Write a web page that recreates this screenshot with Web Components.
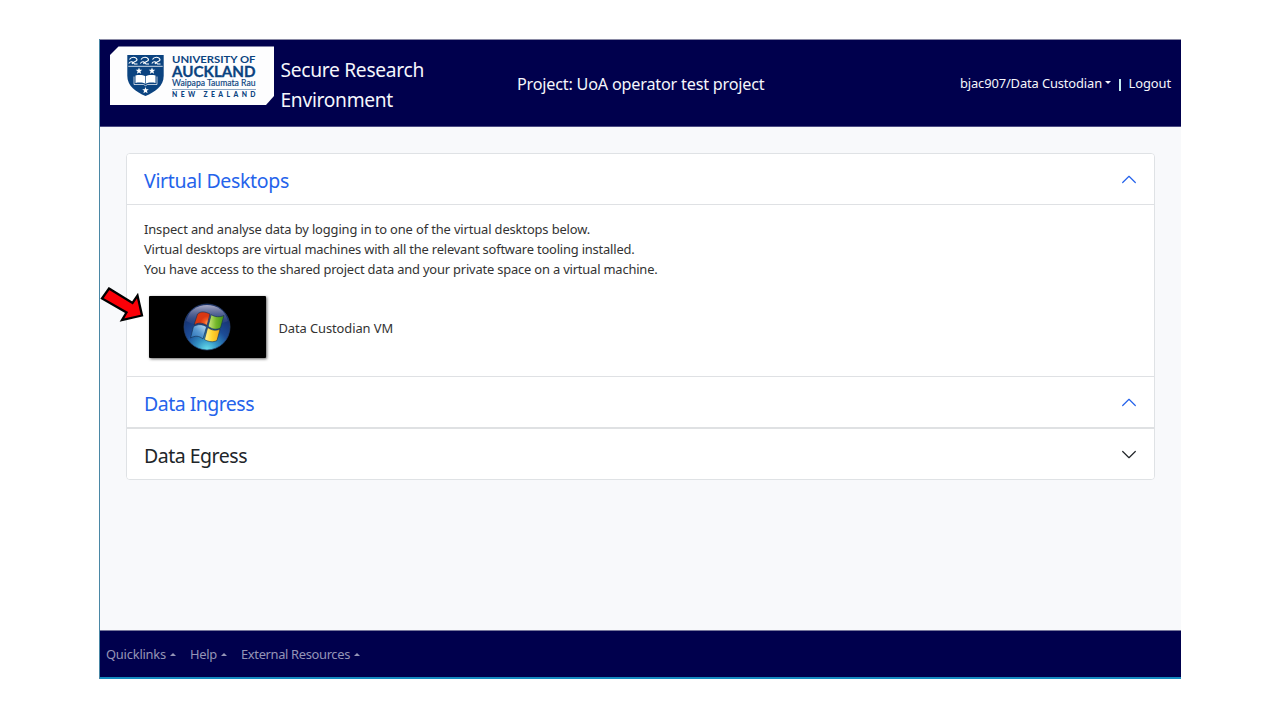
<!DOCTYPE html>
<html lang="en"><head><meta charset="utf-8"><title>Secure Research Environment</title>
<style>html,body{margin:0;background:#fff;font-family:"Noto Sans","Open Sans",sans-serif}body{width:1280px;height:720px;overflow:hidden}</style></head>
<body>
<sre-page></sre-page>
<script>
const define=(name,html,init)=>customElements.define(name,class extends HTMLElement{
  connectedCallback(){
    if(this.shadowRoot)return;
    const t=document.createElement('template');t.innerHTML=html;
    this.attachShadow({mode:'open'}).append(t.content.cloneNode(true));
    if(init)init(this,this.shadowRoot);
  }
});

// One line of text whose tracking is adjusted to fill the width given in "w".
define('fit-text',`<style>:host{display:block;white-space:nowrap}span{display:inline-block}</style><span><slot></slot></span>`,(el,root)=>{
  const s=root.querySelector('span'),w=+el.getAttribute('w');
  el.style.width=w+'px';
  s.style.letterSpacing=(w-s.getBoundingClientRect().width)/el.textContent.length+'px';
});

define('uoa-logo',`<style>:host{display:block;width:164px;height:59px}svg{display:block}</style>
<svg width="164" height="59" viewBox="0 0 164 59">
<path d="M8.500 0.500H164V50L156 59H0V9Z" fill="#fdfdfe"/>
<g fill="#0b4380"><path d="M17.300 9H53.700V30C53.700 40 45 46 35.500 50C26 46 17.300 40 17.300 30Z"/></g>
<path d="M18.300 20.300H52.700" stroke="#fff" stroke-width=".8"/>
<g fill="none" stroke="#fff" stroke-width="1.100"><path d="M19.500 13.500C21 10.500 26 10.500 27 13.500C27.500 16 23 15 22 18M18.800 17.500C21 14.500 23 16 24.500 18H27.500"/><path d="M31 13.500C32.500 10.500 37.500 10.500 38.500 13.500C39 16 34.500 15 33.500 18M30.300 17.500C32.500 14.500 34.500 16 36 18H39"/><path d="M42.500 13.500C44 10.500 49 10.500 50 13.500C50.500 16 46 15 45 18M41.800 17.500C44 14.500 46 16 47.500 18H50.500"/></g>
<g fill="#fff"><path d="M29 21.500l.9 2.200 2.400.1-1.900 1.500.7 2.400-2.100-1.300-2.100 1.300.7-2.400-1.900-1.500 2.400-.1z"/><path d="M42 21.500l.9 2.200 2.400.1-1.900 1.500.7 2.400-2.100-1.300-2.100 1.300.7-2.400-1.900-1.500 2.400-.1z"/><path d="M35.500 41l.9 2.200 2.400.1-1.900 1.500.7 2.400-2.100-1.300-2.100 1.300.7-2.400-1.900-1.500 2.400-.1z"/>
<path d="M25.500 29.500C29 28.700 33 29 35.500 30.200C38 29 42 28.700 45.500 29.500V37C42 36.200 38 36.400 35.500 37.800C33 36.400 29 36.200 25.500 37Z"/><path d="M24 30.500V38.500H33.500L35.500 39.700L37.500 38.500H47V30.500" fill="none" stroke="#fff" stroke-width=".7"/></g>
<path d="M35.500 30V37.500" stroke="#0b4380" stroke-width=".7"/>
<g fill="#0b4380" font-family="Lato,sans-serif">
<text x="62" y="16.900" font-size="10.300" font-weight="700" textLength="83.500" lengthAdjust="spacingAndGlyphs">UNIVERSITY OF</text>
<text x="62" y="30.500" font-size="15" font-weight="700" textLength="83.500" lengthAdjust="spacingAndGlyphs" stroke="#0b4380" stroke-width=".3">AUCKLAND</text>
<text x="62" y="40" font-size="9" textLength="83.500" lengthAdjust="spacingAndGlyphs" stroke="#0b4380" stroke-width=".15">Waipapa Taumata Rau</text>
<text x="62" y="50.700" font-size="6.800" font-weight="900" letter-spacing="2.500" textLength="86" lengthAdjust="spacing">NEW ZEALAND</text></g>
<path d="M62 43.500H146" stroke="#0b4380" stroke-width=".7" opacity=".65"/>
</svg>`);

define('menu-caret',`<style>:host{display:block;width:6px;height:3px}:host([up]){transform:rotate(180deg)}svg{display:block}</style><svg width="6" height="3"><path d="M0 0H6L3 3Z" fill="currentColor"/></svg>`);

define('site-header',`<style>
:host{display:flex;box-sizing:border-box;height:88px;background:#00004d;color:#f5f6fb;border-top:1px solid #8a8aa5;border-bottom:1px solid #4c4c82;padding:6px 9px 0 10px}
.title{margin:8.500px 0 0 6.500px;font-size:19.200px;line-height:30px;width:236.500px}
.project{font-size:16.200px;line-height:24px;margin-top:26px;width:443px}
.user{display:flex;align-items:center;height:20px;margin-top:27px;font-size:12.900px;line-height:20px}
menu-caret{margin:-1px 0 0 3px}.bar{width:1.500px;height:12px;background:#c2edf0;margin:3px 8px 0}
</style><uoa-logo></uoa-logo>
<div class="title"><fit-text w="143.500">Secure Research</fit-text><fit-text w="112.500">Environment</fit-text></div>
<div class="project"><fit-text w="247.500">Project: UoA operator test project</fit-text></div>
<div class="user"><fit-text w="142">bjac907/Data Custodian</fit-text><menu-caret></menu-caret><span class="bar"></span><fit-text w="42.500">Logout</fit-text></div>`);

define('fold-section',`<style>
:host{display:block;background:#fff;color:#212529}:host([open]){color:#2563eb}
header{display:flex;align-items:center;justify-content:space-between;height:50px;padding:0 18px 0 17px;font-size:19.500px;line-height:30px}
::slotted(fit-text){padding-top:3px}
svg{display:block}:host([open]) svg{transform:rotate(180deg)}
</style><header><slot name="title"></slot><svg width="14" height="9" viewBox="0 0 14 9"><path d="M.7 1.500L7 7.700L13.300 1.500" fill="none" stroke="currentColor" stroke-width="1.200" stroke-linecap="round" stroke-linejoin="round"/></svg></header><slot></slot>`);

define('vm-tile',`<style>:host{display:flex;align-items:center;height:62px;color:#333}
.screen{width:117px;height:62px;background:#000;border-radius:1px;box-shadow:1px 1px 3px #0009;display:grid;place-items:center;margin-right:12.500px}svg{display:block;margin-left:-2px}
::slotted(fit-text){padding-top:2px}
</style><div class="screen"><svg width="48" height="48" viewBox="0 0 48 48">
<defs><radialGradient id="o" cx=".5" cy="1" r=".95"><stop stop-color="#6be3ee"/><stop offset=".25" stop-color="#3393c5"/><stop offset=".52" stop-color="#1c4c97"/><stop offset="1" stop-color="#14265f"/></radialGradient>
<linearGradient id="h" x2="0" y2="1"><stop stop-color="#a9abc6"/><stop offset="1" stop-color="#45578f" stop-opacity=".1"/></linearGradient>
<radialGradient id="r" cx=".9" cy=".8"><stop stop-color="#ffb56d"/><stop offset=".5" stop-color="#f25a22"/><stop offset="1" stop-color="#d93712"/></radialGradient>
<linearGradient id="g"><stop stop-color="#d0ea80"/><stop offset=".5" stop-color="#75b72b"/><stop offset="1" stop-color="#419315"/></linearGradient>
<linearGradient id="b" x1="1" x2="0" y2="1"><stop stop-color="#c3e3f5"/><stop offset=".5" stop-color="#5798d0"/><stop offset="1" stop-color="#286fb5"/></linearGradient>
<linearGradient id="y"><stop stop-color="#fff4a0"/><stop offset=".5" stop-color="#ffd52e"/><stop offset="1" stop-color="#f3a91b"/></linearGradient></defs>
<circle cx="24" cy="24" r="23" fill="url(#o)" stroke="#294778" stroke-width=".7"/>
<path d="M3 18C6 7 14 2 24 2S42 7 45 18C34 23 15 25 3 18Z" fill="url(#h)"/>
<g stroke="#142e4c" stroke-width=".6"><path d="M14.500 11C18 8 22 8.500 27 11L24 22.500C19 19.500 15 19.500 11 22Z" fill="url(#r)"/><path d="M28.200 11.700C32 14 36.500 14.500 41 12.500L37.500 25C33 27 29 26.500 25.200 23.200Z" fill="url(#g)"/><path d="M10.500 23.500C15 21 19 21 23.500 23.700L20 36C16 32.500 12 32.500 7.500 35Z" fill="url(#b)"/><path d="M24.700 24.500C29 27.700 33 27.700 37 26.200L34 37.500C30 39.500 26 39 21.500 36.500Z" fill="url(#y)"/></g></svg></div><slot></slot>`);

define('red-pointer',`<style>:host{display:block;position:absolute;left:-1px;top:245px}svg{display:block}</style><svg width="46" height="40" viewBox="0 0 46 40"><path d="M10 4.500L33.500 19L38.500 11.500L43 31.500L23 36L27.500 28.500L3 14.500Z" fill="#fb0007" stroke="#000" stroke-width="2.300"/></svg>`);

define('fold-list',`<style>
:host{display:block;width:1027px;border:1px solid #dfe2e5;border-radius:4px;overflow:hidden;background:#fff}
.body{box-sizing:border-box;height:173px;border-top:1px solid #dfe1e4;border-bottom:1px solid #dfe1e4;padding:14px 17px 0;font-size:12.900px;line-height:20px;color:#333}
vm-tile{margin:17px 0 0 5px}.last{border-top:2px solid #dfe1e3}
</style><fold-section open><fit-text slot="title" w="145">Virtual Desktops</fit-text>
<div class="body"><fit-text w="446">Inspect and analyse data by logging in to one of the virtual desktops below.</fit-text><fit-text w="490.500">Virtual desktops are virtual machines with all the relevant software tooling installed.</fit-text><fit-text w="513.500">You have access to the shared project data and your private space on a virtual machine.</fit-text>
<vm-tile><fit-text w="114.500">Data Custodian VM</fit-text></vm-tile></div></fold-section>
<fold-section open><fit-text slot="title" w="110">Data Ingress</fit-text></fold-section>
<fold-section class="last"><fit-text slot="title" w="103">Data Egress</fit-text></fold-section>`);

define('site-footer',`<style>:host{display:flex;box-sizing:border-box;height:49px;align-items:center;gap:14px;background:#00004d;color:#9494b6;border-top:1px solid #77779b;border-bottom:2px solid #168cc0;padding:0 6px;font-size:12.900px;line-height:20px}
div{display:flex;align-items:center;gap:4px}</style>
<div><fit-text w="60">Quicklinks</fit-text><menu-caret up></menu-caret></div><div><fit-text w="27">Help</fit-text><menu-caret up></menu-caret></div><div><fit-text w="109">External Resources</fit-text><menu-caret up></menu-caret></div>`);

define('sre-page',`<style>:host{display:flex;flex-direction:column;box-sizing:border-box;position:relative;width:1082px;height:640px;margin:39px 0 0 99px;border-left:1px solid #4a87a5;background:#f8f9fb}
main{flex:1;padding:26px 26px 0}</style>
<site-header></site-header><main><fold-list></fold-list></main><site-footer></site-footer><red-pointer></red-pointer>`);
</script></body></html>
